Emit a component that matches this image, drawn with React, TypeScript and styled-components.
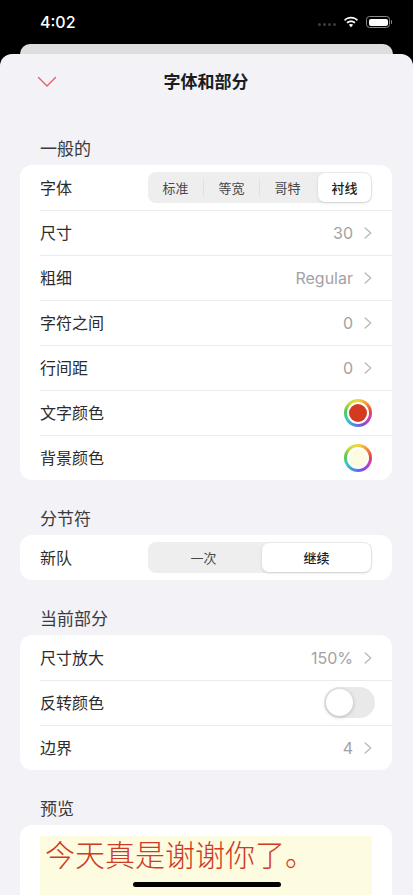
import styled, { createGlobalStyle } from "styled-components";
import { ReactNode } from "react";

const Global = createGlobalStyle`
  html, body { margin: 0; padding: 0; background: #000; }
  body { font-family: Inter, "Noto Sans CJK SC", sans-serif; }
`;

const Chevron = () => (
  <S.ChevronIcon viewBox="0 0 8 12" fill="none">
    <path d="M1.200 1 L6.700 6 L1.200 11" stroke="#bcbcc0" strokeWidth="1.500" strokeLinecap="round" strokeLinejoin="round" />
  </S.ChevronIcon>
);

const ValueRow = ({ label, value }: { label: string; value: string }) => (
  <S.Row>
    <S.Label>{label}</S.Label>
    <S.Value>{value}</S.Value>
    <Chevron />
  </S.Row>
);

const ColorRow = ({ label, color }: { label: string; color: string }) => (
  <S.Row>
    <S.Label>{label}</S.Label>
    <S.Ring>
      <S.Swatch $color={color} />
    </S.Ring>
  </S.Row>
);

const Segments = ({ items, active }: { items: string[]; active: number }) => (
  <S.Segmented $count={items.length}>
    {items.map((item, i) => (
      <S.Segment key={item} $active={i === active} $divider={i !== active && i + 1 !== active && i < items.length - 1}>
        {item}
      </S.Segment>
    ))}
  </S.Segmented>
);

const Section = ({ title, children }: { title: string; children: ReactNode }) => (
  <S.Section>
    <S.SectionTitle>{title}</S.SectionTitle>
    <S.Card>{children}</S.Card>
  </S.Section>
);

export default function App() {
  return (
    <S.Screen>
      <Global />
      <S.StatusBar>
        <S.Time>4:02</S.Time>
        <S.StatusIcons>
          <S.Signal>
            <i /><i /><i /><i />
          </S.Signal>
          <svg width="16" height="12" viewBox="0 0 17 12" fill="#fff">
            <path d="M8.5 2.4c2.4 0 4.6.9 6.2 2.5l1.2-1.3C13.9 1.6 11.3.5 8.5.5S3.100 1.600 1.100 3.600l1.200 1.300C3.900 3.300 6.100 2.400 8.500 2.400z" />
            <path d="M8.500 6.200c1.300 0 2.600.5 3.500 1.400l1.300-1.300C12 5 10.300 4.300 8.500 4.300S5 5 3.700 6.300L5 7.600c.9-.9 2.200-1.400 3.500-1.400z" />
            <path d="M8.500 8.100c-.9 0-1.700.3-2.300.9l2.300 2.500 2.300-2.500c-.6-.6-1.400-.9-2.300-.9z" />
          </svg>
          <S.Battery>
            <S.BatteryFill />
          </S.Battery>
        </S.StatusIcons>
      </S.StatusBar>
      <S.BackCard />
      <S.Sheet>
        <S.Header>
          <S.CloseButton viewBox="0 0 20 12" fill="none">
            <path d="M1.500 1.500 L10 10 L18.500 1.500" stroke="#f0556a" strokeWidth="1.300" strokeLinecap="round" strokeLinejoin="round" />
          </S.CloseButton>
          <S.Title>字体和部分</S.Title>
        </S.Header>

        <Section title="一般的">
          <S.Row>
            <S.Label>字体</S.Label>
            <Segments items={["标准", "等宽", "哥特", "衬线"]} active={3} />
          </S.Row>
          <ValueRow label="尺寸" value="30" />
          <ValueRow label="粗细" value="Regular" />
          <ValueRow label="字符之间" value="0" />
          <ValueRow label="行间距" value="0" />
          <ColorRow label="文字颜色" color="#d43a1f" />
          <ColorRow label="背景颜色" color="#fdfbe0" />
        </Section>

        <Section title="分节符">
          <S.Row>
            <S.Label>新队</S.Label>
            <Segments items={["一次", "继续"]} active={1} />
          </S.Row>
        </Section>

        <Section title="当前部分">
          <ValueRow label="尺寸放大" value="150%" />
          <S.Row>
            <S.Label>反转颜色</S.Label>
            <S.Toggle>
              <S.Knob />
            </S.Toggle>
          </S.Row>
          <ValueRow label="边界" value="4" />
        </Section>

        <Section title="预览">
          <S.PreviewPad>
            <S.Preview>今天真是谢谢你了。</S.Preview>
          </S.PreviewPad>
        </Section>
      </S.Sheet>
      <S.HomeIndicator />
    </S.Screen>
  );
}

const S = {
  Screen: styled.div`
    position: relative;
    width: 413px;
    height: 895px;
    overflow: hidden;
    background: #000;
    display: flex;
    flex-direction: column;
  `,
  StatusBar: styled.div`
    height: 44px;
    flex: none;
    display: flex;
    align-items: center;
    justify-content: space-between;
    padding: 0 23px 0 40px;
    color: #fff;
  `,
  Time: styled.span`
    font-size: 16px;
    font-weight: 500;
    line-height: 20px;
  `,
  StatusIcons: styled.div`
    display: flex;
    align-items: center;
    gap: 7px;
  `,
  Signal: styled.div`
    display: flex;
    gap: 2px;
    margin-top: 5px;
    i {
      width: 3px;
      height: 3px;
      border-radius: 50%;
      background: #3c3c3e;
    }
  `,
  Battery: styled.div`
    position: relative;
    box-sizing: border-box;
    width: 24px;
    height: 12px;
    padding: 1.5px;
    border: 1px solid #8a8a8c;
    border-radius: 3.500px;
    &::after {
      content: "";
      position: absolute;
      right: -3px;
      top: 3px;
      width: 1.500px;
      height: 4px;
      border-radius: 0 1px 1px 0;
      background: #8a8a8c;
    }
  `,
  BatteryFill: styled.div`
    height: 100%;
    border-radius: 2px;
    background: #fff;
  `,
  BackCard: styled.div`
    flex: none;
    height: 10px;
    margin: 0 20px;
    border-radius: 10px 10px 0 0;
    background: #dedee0;
  `,
  Sheet: styled.div`
    flex: 1;
    min-height: 0;
    background: #f2f2f7;
    border-radius: 12px 12px 0 0;
    padding: 0 21px 0 20px;
  `,
  Header: styled.div`
    position: relative;
    height: 56px;
    display: flex;
    align-items: center;
    justify-content: center;
  `,
  CloseButton: styled.svg`
    position: absolute;
    left: 17px;
    top: 22px;
    width: 20px;
    height: 12px;
  `,
  Title: styled.h1`
    margin: 0;
    font-size: 17px;
    font-weight: 700;
    line-height: 24px;
    color: #1c1c1e;
  `,
  Section: styled.section`
    margin-top: 29px;
  `,
  SectionTitle: styled.h2`
    margin: 0;
    padding-left: 20px;
    height: 26px;
    font-size: 17px;
    font-weight: 400;
    line-height: 21px;
    color: #3a3a3c;
  `,
  Card: styled.div`
    background: #fff;
    border-radius: 12px;
    padding-left: 20px;
    overflow: hidden;
  `,
  Row: styled.div`
    box-sizing: border-box;
    height: 45px;
    display: flex;
    align-items: center;
    padding-right: 20px;
    & + & {
      box-shadow: inset 0 1px 0 #ebebed;
    }
  `,
  Label: styled.span`
    flex: 1;
    margin-top: 1px;
    font-size: 16px;
    line-height: 20px;
    color: #2c2c2e;
  `,
  Value: styled.span`
    margin-top: 1px;
    margin-right: 11px;
    font-size: 16px;
    line-height: 20px;
    color: #a2a2a6;
  `,
  ChevronIcon: styled.svg`
    width: 8px;
    height: 12px;
    flex: none;
  `,
  Ring: styled.div`
    box-sizing: border-box;
    width: 28px;
    height: 28px;
    border-radius: 50%;
    padding: 5px;
    display: flex;
    background: conic-gradient(#f4d43c, #f59a3a, #e8483c, #c23ec8, #7a4fe0, #4a8fe8, #3cc8c0, #5cc850, #c8dc40, #f4d43c);
  `,
  Swatch: styled.div<{ $color: string }>`
    flex: 1;
    border-radius: 50%;
    background: ${(p) => p.$color};
    box-shadow: 0 0 0 2px #fff;
  `,
  Segmented: styled.div<{ $count: number }>`
    width: 224px;
    height: 31px;
    border-radius: 8px;
    background: #eeeeef;
    display: grid;
    grid-template-columns: repeat(${(p) => p.$count}, 1fr);
  `,
  Segment: styled.div<{ $active: boolean; $divider: boolean }>`
    position: relative;
    margin: ${(p) => (p.$active ? "1px 1px 1px 2px" : "1px 2px 1px 1px")};
    display: flex;
    align-items: center;
    justify-content: center;
    font-size: 13px;
    font-weight: ${(p) => (p.$active ? 500 : 400)};
    color: ${(p) => (p.$active ? "#1c1c1e" : "#48484a")};
    border-radius: 7px;
    background: ${(p) => (p.$active ? "#fff" : "transparent")};
    box-shadow: ${(p) => (p.$active ? "0 1px 3px rgba(0,0,0,.14)" : "none")};
    &::after {
      content: "";
      display: ${(p) => (p.$divider ? "block" : "none")};
      position: absolute;
      right: -2px;
      top: 6px;
      bottom: 6px;
      width: 1px;
      background: #e0e0e2;
    }
  `,
  Toggle: styled.div`
    box-sizing: border-box;
    width: 51px;
    height: 31px;
    margin-right: -3px;
    padding: 2px;
    border-radius: 16px;
    background: #e9e9ea;
  `,
  Knob: styled.div`
    width: 27px;
    height: 27px;
    border-radius: 50%;
    background: #fff;
    box-shadow: 0 1px 4px rgba(0, 0, 0, 0.22);
  `,
  PreviewPad: styled.div`
    padding: 11px 20px 0 0;
  `,
  Preview: styled.div`
    height: 120px;
    padding-left: 5px;
    background: #fdfbe0;
    color: #cf3a22;
    font-size: 30px;
    font-weight: 300;
    line-height: 39px;
  `,
  HomeIndicator: styled.div`
    position: absolute;
    left: 133px;
    bottom: 8px;
    width: 148px;
    height: 5px;
    border-radius: 3px;
    background: #000;
  `,
};
